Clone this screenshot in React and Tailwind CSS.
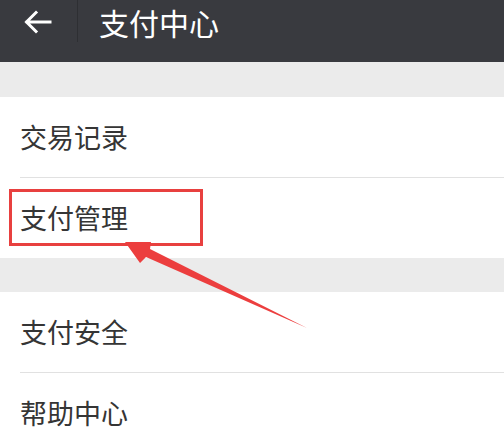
const Row = ({ label, divider }) => (
  <div className="bg-white">
    <div className="h-[80px] flex items-center pl-5 text-[27px] text-[#353535]">{label}</div>
    {divider && <div className="ml-5 h-px bg-[#e1e1e1]" />}
  </div>
)

export default function App() {
  return (
    <div
      className="relative w-[504px] h-[440px] overflow-hidden bg-[#ebebeb]"
      style={{ fontFamily: '"Noto Sans CJK SC", "Noto Sans", sans-serif' }}
    >
      <div className="h-[62px] bg-[#393a3f] flex items-start">
        <div className="w-[77px] h-[44px] flex items-center pl-6">
          <svg width="28" height="24" viewBox="0 0 28 24" fill="none" stroke="#fff" strokeWidth="3" strokeLinecap="square">
            <path d="M3 12h23M12 2.5L2.5 12l9.5 9.5" />
          </svg>
        </div>
        <div className="w-px h-[42px] bg-[#2e2f33]" />
        <div className="h-[44px] flex items-center pl-[21px] text-[30px] text-white">支付中心</div>
      </div>

      <div className="h-[35px]" />
      <Row label="交易记录" divider />
      <Row label="支付管理" />

      <div className="h-[34px]" />
      <Row label="支付安全" divider />
      <Row label="帮助中心" />

      <div className="absolute left-[9px] top-[189px] w-[194px] h-[57px] border-[3px] border-[#e8403f]" />
      <svg className="absolute left-0 top-0" width="504" height="440" viewBox="0 0 504 440">
        <polygon
          points="125,242 140,263 146,257 307,328 150,249 151,242"
          fill="#ec3e3e"
        />
      </svg>
    </div>
  )
}
